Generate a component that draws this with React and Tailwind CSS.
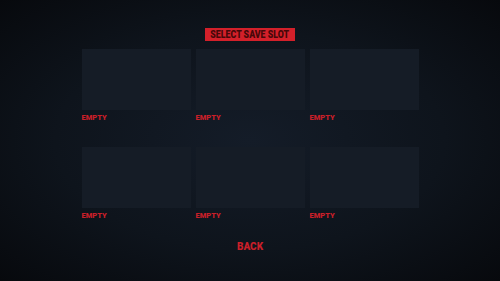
export default function App() {
  const slots = [1, 2, 3, 4, 5, 6];

  return (
    <main
      className="flex h-[281px] w-[500px] flex-col items-center overflow-hidden bg-[radial-gradient(ellipse_at_center,#141c28_0%,#0e141c_55%,#07090d_100%)]"
      style={{ fontFamily: "Roboto, 'Liberation Sans', sans-serif" }}
    >
      <div className="mt-[28px] flex h-[13px] w-[90px] items-center justify-center bg-[#d3202a]">
        <span className="scale-x-[0.88] text-[10px] font-black uppercase leading-none text-red-950">
          Select Save Slot
        </span>
      </div>

      <div className="mt-[8px] grid grid-cols-[repeat(3,109px)] gap-x-[5px] gap-y-[25px]">
        {slots.map((slot) => (
          <div key={slot}>
            <div className="h-[61px] w-[109px] bg-[#151c26]" />
            <p className="mt-[4px] text-[7.5px] font-black leading-[8px] text-[#c81f29]">EMPTY</p>
          </div>
        ))}
      </div>

      <button className="mt-[21px] text-[10px] font-black leading-[12px] text-[#c81f29]">BACK</button>
    </main>
  );
}
